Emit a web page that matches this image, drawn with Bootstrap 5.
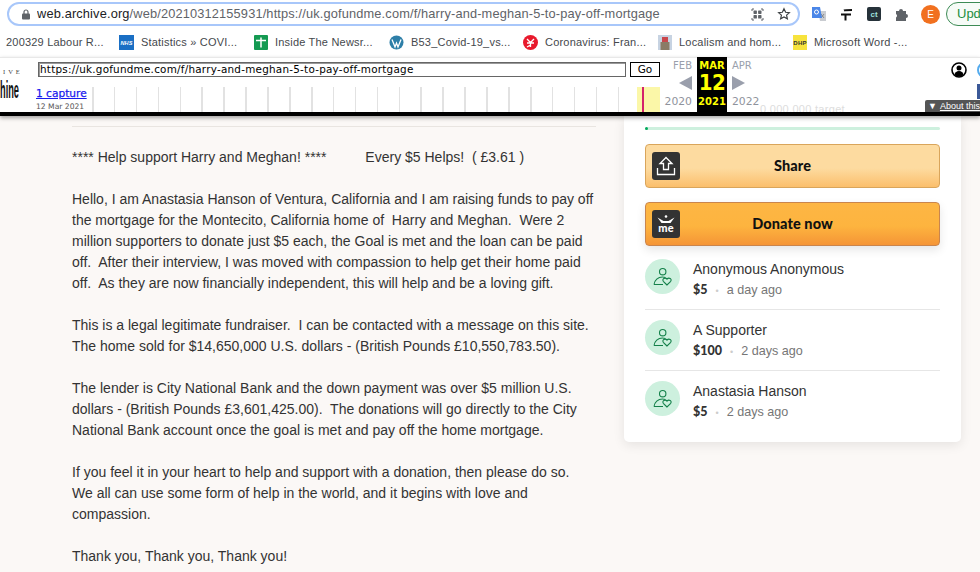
<!DOCTYPE html>
<html lang="en">
<head>
  <meta charset="UTF-8">
  <meta name="viewport" content="width=device-width, initial-scale=1.0">
  <title>Harry and Meghan fundraiser</title>
  <link href="https://cdn.jsdelivr.net/npm/bootstrap@5.3.0/dist/css/bootstrap.min.css" rel="stylesheet">
  <style>
    html, body { height: 572px; overflow: hidden; }
    body { width: 980px; background: #fbf8f6; font-family: "Liberation Sans", Arial, sans-serif; color: #333; }

    /* browser chrome */
    .top-bar { height: 30px; background: #fff; padding: 0 0 2px 7px; overflow: hidden; }
    .addr-pill { width: 793px; height: 24px; flex: none; border: 2px solid #a8c7fa; border-radius: 12px; padding: 0 7px 0 12px; font-size: 12.8px; color: #5f6368; letter-spacing: .15px; }
    .addr-pill b { font-weight: 400; color: #202124; }
    .addr-url { margin-left: 6px; flex: 1; white-space: nowrap; overflow: hidden; }
    .qr-ico { margin-right: 13px; }
    .ext-icons { padding-left: 12px; flex: none; }
    .ext-icons svg { margin-right: 14px; flex: none; }
    .avatar-e { width: 19px; height: 19px; flex: none; border-radius: 50%; background: #f1701f; color: #fff; font-size: 10px; line-height: 19px; text-align: center; margin-left: -2px; }
    .update-pill { height: 24px; width: 60px; flex: none; margin-left: 6px; border: 1px solid #3d8b55; border-radius: 12px; color: #1e8e3e; font-size: 13px; line-height: 22px; padding-left: 10px; white-space: nowrap; background: #f6fbf7; }
    .bookmarks { height: 27px; background: #fff; font-size: 11px; color: #45484c; padding: 0 0 3px 6px; white-space: nowrap; letter-spacing: .2px; }
    .bm-item { gap: 7px; }
    .bm-item svg { flex: none; }
    .bm-1 { width: 113px; }
    .bm-2, .bm-3, .bm-5, .bm-6 { width: 135px; }
    .bm-4 { width: 134px; }

    /* wayback toolbar */
    .wb-bar { height: 59px; background: #fff; border-bottom: 4px solid #000; box-shadow: inset 0 1px 0 #e8e8e8, 0 2px 4px rgba(0,0,0,.35); position: relative; z-index: 2; overflow: hidden; }
    .wb-logo { width: 36px; flex: none; color: #111; overflow: hidden; }
    .wb-ive { font-family: "Liberation Serif", serif; font-size: 6.5px; letter-spacing: 3px; padding: 11px 0 0 3px; line-height: 8px; color: #444; }
    .wb-hine { font-family: "Liberation Sans", sans-serif; font-size: 24px; font-weight: 700; line-height: 20px; transform: scaleX(.385); transform-origin: 0 0; margin-top: 4px; }
    .wb-mid { width: 624px; flex: none; }
    .wb-url { width: 588px; height: 15px; margin: 5px 4px 0 2px; border: 1px solid #666; box-shadow: inset 1px 1px 0 #999; font-family: "DejaVu Sans", sans-serif; font-size: 10.4px; line-height: 13px; padding-left: 1px; color: #000; letter-spacing: .24px; white-space: nowrap; }
    .wb-go { width: 30px; height: 15px; margin-top: 5px; border: 1px solid #000; font-family: "DejaVu Sans", sans-serif; font-size: 10.5px; line-height: 13px; text-align: center; color: #000; }
    .wb-caps { width: 56px; flex: none; }
    .wb-caps a { display: block; font-family: "DejaVu Sans", sans-serif; font-size: 10.6px; line-height: 12px; color: #1a1aee; margin-top: 10px; white-space: nowrap; -webkit-text-stroke: .25px #1a1aee; }
    .wb-caps div { font-family: "DejaVu Sans", sans-serif; font-size: 7.6px; line-height: 10px; color: #555; margin-top: 3px; white-space: nowrap; }
    .wb-line { flex: 1; height: 25px; margin-top: 10px; background: repeating-linear-gradient(90deg, #e2e2e2 0 1.5px, transparent 1.5px 21.9px); position: relative; }
    .wb-mark { position: absolute; left: 545px; top: 0; width: 23px; height: 25px; background: #fbf7a8; }
    .wb-mark i { position: absolute; left: 5px; top: 0; width: 2px; height: 25px; background: #d4236b; }
    .wb-cal { margin-left: 2px; flex: none; font-family: "DejaVu Sans", sans-serif; color: #9a9fac; position: relative; z-index: 1; }
    .cal-side { width: 32px; font-size: 10px; }
    .cal-left { text-align: right; padding-right: 2px; }
    .cal-right { padding-left: 2px; }
    .cal-mid { width: 30px; background: #000; color: #ff0; margin: 0 3px; font-weight: 700; text-align: center; }
    .cal-mid .cal-mon { font-size: 10px; line-height: 11px; padding-top: 3px; }
    .cal-mid .cal-day { font-family: "DejaVu Sans Condensed", "DejaVu Sans", sans-serif; font-size: 22px; line-height: 24px; letter-spacing: -.5px; }
    .cal-mid .cal-yr { font-size: 10px; line-height: 14px; }
    .cal-top { line-height: 11px; padding-top: 3px; }
    .cal-arrow { height: 24px; }
    .cal-bot { line-height: 14px; font-size: 10.8px; color: #8f939c; }
    .wb-ghost { position: absolute; left: 760px; top: 44px; font-size: 11px; color: #ddd; letter-spacing: .3px; }
    .wb-about { position: absolute; right: 0; bottom: 0; width: 55px; height: 12px; background: #555; color: #fff; font-size: 9px; line-height: 12px; padding-left: 3px; white-space: nowrap; border-radius: 2px 0 0 0; }
    .wb-about u { margin-left: 3px; }
    .wb-user { position: absolute; left: 951px; top: 5px; }
    .wb-fb { position: absolute; left: 977px; top: 27px; width: 3px; height: 15px; background: #3b5998; }
    .wb-tw { position: absolute; left: 977px; top: 5px; width: 16px; height: 16px; border: 2px solid #55acee; border-radius: 50%; }

    /* page */
    .story-col { width: 624px; padding: 10px 28px 0 72px; flex: none; }
    .story-rule { border-top: 1px solid #e9e5e1; height: 21px; }
    .story-col p { font-size: 14px; line-height: 21px; margin: 0 0 21px; color: #333; white-space: nowrap; }
    .side-card { width: 337px; height: 326px; background: #fff; border-radius: 0 0 5px 5px; box-shadow: 0 3px 12px rgba(0,0,0,.09); padding: 11px 21px 0; }
    .prog-track { height: 3px; background: #cdf0de; border-radius: 2px; }
    .prog-fill { width: 3px; height: 3px; background: #02a95c; border-radius: 2px; }
    .act-btn { height: 44px; width: 100%; margin-top: 14px; border-radius: 4px; font-family: Lato, sans-serif; font-weight: 900; font-size: 14.5px; color: #111; position: relative; letter-spacing: .1px; padding: 0; }
    .btn-share { background: linear-gradient(#fddba0 0%, #fddba0 55%, #fbbf6c 100%); border: 1px solid #d9a55b; }
    .btn-donate { background: linear-gradient(#fdb644 0%, #fdb43f 55%, #f59536 100%); border: 1px solid #c9854d; box-shadow: 0 4px 10px rgba(0,0,0,.1); }
    .act-ico { position: absolute; left: 6px; top: 7px; width: 28px; height: 28px; border-radius: 3px; background: #333; }
    .donor-list { margin-top: 3px; }
    .donor-row { height: 61px; padding-top: 10px; gap: 13px; border-bottom: 1px solid #e6e6e6; }
    .donor-row:last-child { border-bottom: 0; }
    .donor-ico { width: 35px; height: 35px; background: #cdf0de; border-radius: 50%; flex: none; }
    .donor-name { font-size: 14px; line-height: 18px; color: #333; margin-top: 1px; }
    .donor-meta { font-size: 12.6px; line-height: 18px; margin-top: 3px; color: #767676; }
    .donor-meta b { font-family: Lato, sans-serif; font-weight: 900; color: #333; font-size: 12.5px; }
    .donor-meta i { font-style: normal; color: #ccc; margin: 0 8px; font-size: 9px; }
  </style>
</head>
<body>

  <!-- Browser toolbar -->
  <div class="top-bar d-flex align-items-center">
    <div class="addr-pill d-flex align-items-center">
      <svg width="10" height="11" viewBox="0 0 10 11"><rect x="1" y="4.5" width="8" height="6" rx="1" fill="#5f6368"/><path d="M3 5V3a2 2 0 0 1 4 0v2" fill="none" stroke="#5f6368" stroke-width="1.2"/></svg>
      <span class="addr-url"><b>web.archive.org</b>/web/20210312155931/https://uk.gofundme.com/f/harry-and-meghan-5-to-pay-off-mortgage</span>
      <svg class="qr-ico" width="13" height="13" viewBox="0 0 13 13"><path d="M1 3V1h2M10 1h2v2M12 10v2h-2M3 12H1v-2" fill="none" stroke="#5f6368"/><rect x="2.5" y="2.5" width="3.4" height="3.4" rx=".6" fill="#5f6368"/><rect x="7.1" y="2.5" width="3.4" height="3.4" rx=".6" fill="#5f6368"/><rect x="2.5" y="7.1" width="3.4" height="3.4" rx=".6" fill="#5f6368"/><rect x="7.1" y="7.1" width="3.4" height="3.4" rx=".6" fill="#5f6368"/></svg>
      <svg width="14" height="14" viewBox="0 0 24 24"><path d="M12 3l2.800 6 6.400.7-4.800 4.300 1.400 6.300L12 17l-5.800 3.300 1.400-6.300L2.800 9.700 9.200 9z" fill="none" stroke="#3c4043" stroke-width="2"/></svg>
    </div>
    <div class="ext-icons d-flex align-items-center">
      <svg width="14" height="14" viewBox="0 0 14 14"><path d="M6 4h8v10H8z" fill="#c9ccd1"/><path d="M9 7l3 4M12 7l-3 4" stroke="#777" stroke-width=".8"/><path d="M0 0h8l2 11H0z" fill="#4a86e8"/><circle cx="4.500" cy="5" r="2" fill="none" stroke="#fff"/></svg>
      <svg width="13" height="13" viewBox="0 0 13 13"><path d="M4 2.500c1-.5 6-.5 8-.5M1 6.500h10M5.500 6.500v6" fill="none" stroke="#111" stroke-width="2"/></svg>
      <svg width="14" height="14" viewBox="0 0 14 14"><rect width="14" height="14" rx="2" fill="#26323a"/><text x="7" y="10" font-size="8" font-family="Liberation Sans" font-weight="700" text-anchor="middle" fill="#9fe0dc">ct</text></svg>
      <svg width="14" height="14" viewBox="0 0 14 14"><path d="M1 4h3a2 2 0 0 1 4 0h3v3a2 2 0 0 1 0 4v3H1v-3.500a2 2 0 0 0 0-3.500z" fill="#5f6368"/></svg>
      <div class="avatar-e">E</div>
      <div class="update-pill">Upd</div>
    </div>
  </div>

  <!-- Bookmarks -->
  <div class="bookmarks d-flex align-items-center">
    <div class="bm-item bm-1 d-flex align-items-center">200329 Labour R...</div>
    <div class="bm-item bm-2 d-flex align-items-center">
      <svg width="15" height="15" viewBox="0 0 15 15"><rect width="15" height="15" fill="#1a6fc4"/><text x="7.500" y="10" font-size="5.500" font-weight="700" font-style="italic" font-family="Liberation Sans" text-anchor="middle" fill="#fff">NHS</text></svg>Statistics » COVI...</div>
    <div class="bm-item bm-3 d-flex align-items-center">
      <svg width="14" height="15" viewBox="0 0 14 15"><rect width="14" height="15" rx="1" fill="#149a52"/><path d="M2 5.500h10M7 2.500v10" stroke="#fff" stroke-width="1.500"/></svg>Inside The Newsr...</div>
    <div class="bm-item bm-4 d-flex align-items-center">
      <svg width="15" height="15" viewBox="0 0 15 15"><circle cx="7.500" cy="7.500" r="7" fill="#2e7fa8"/><path d="M3 4.500l3 7.500 1.500-4 1.500 4 3-7.500" fill="none" stroke="#fff" stroke-width="1.300"/></svg>B53_Covid-19_vs...</div>
    <div class="bm-item bm-5 d-flex align-items-center">
      <svg width="15" height="15" viewBox="0 0 15 15"><circle cx="7.500" cy="7.500" r="7.500" fill="#e8192c"/><path d="M4 4l3.500 3.500L11 4M4 8h7M7.500 7.500V12M4 12l3.500-2" fill="none" stroke="#fff" stroke-width="1.300"/></svg>Coronavirus: Fran...</div>
    <div class="bm-item bm-6 d-flex align-items-center">
      <svg width="14" height="15" viewBox="0 0 14 15"><rect width="14" height="15" fill="#c7d3e2"/><rect x="4" y="2" width="6" height="5" fill="#c9474c"/><rect x="2.500" y="7" width="9" height="8" fill="#8a7b66"/></svg>Localism and hom...</div>
    <div class="bm-item d-flex align-items-center">
      <svg width="14" height="15" viewBox="0 0 14 15"><rect width="14" height="15" fill="#f7e33d"/><text x="7" y="10" font-size="6" font-weight="700" font-family="Liberation Sans" text-anchor="middle" fill="#333">DHP</text></svg>Microsoft Word -...</div>
  </div>

  <!-- Wayback toolbar -->
  <div class="wb-bar d-flex">
    <div class="wb-logo">
      <div class="wb-ive">IVE</div>
      <div class="wb-hine">hine</div>
    </div>
    <div class="wb-mid">
      <div class="d-flex">
        <div class="wb-url">https://uk.gofundme.com/f/harry-and-meghan-5-to-pay-off-mortgage</div>
        <div class="wb-go">Go</div>
      </div>
      <div class="d-flex">
        <div class="wb-caps">
          <a href="#">1 capture</a>
          <div>12 Mar 2021</div>
        </div>
        <div class="wb-line"><div class="wb-mark"><i></i></div></div>
      </div>
    </div>
    <div class="wb-ghost">0,000,000 target</div>
    <div class="wb-cal d-flex">
      <div class="cal-side cal-left">
        <div class="cal-top">FEB</div>
        <div class="cal-arrow d-flex align-items-center justify-content-end"><svg width="13" height="14" viewBox="0 0 13 14"><path d="M13 0v14L0 7z" fill="#9a9fac"/></svg></div>
        <div class="cal-bot">2020</div>
      </div>
      <div class="cal-mid">
        <div class="cal-mon">MAR</div>
        <div class="cal-day">12</div>
        <div class="cal-yr">2021</div>
      </div>
      <div class="cal-side cal-right">
        <div class="cal-top">APR</div>
        <div class="cal-arrow d-flex align-items-center"><svg width="13" height="14" viewBox="0 0 13 14"><path d="M0 0v14l13-7z" fill="#9a9fac"/></svg></div>
        <div class="cal-bot">2022</div>
      </div>
    </div>
    <svg class="wb-user" width="16" height="16" viewBox="0 0 16 16"><circle cx="8" cy="8" r="7" fill="#fff" stroke="#000" stroke-width="1.600"/><circle cx="8" cy="6" r="2.500"/><path d="M3.500 13a4.500 4 0 0 1 9 0 7 7 0 0 1-9 0z"/></svg>
    <div class="wb-tw"></div>
    <div class="wb-fb"></div>
    <div class="wb-about">▼<u>About this</u></div>
  </div>

  <!-- Page -->
  <div class="d-flex">
    <div class="story-col">
      <div class="story-rule"></div>
      <p>**** Help support Harry and Meghan! ****&nbsp;&nbsp;&nbsp;&nbsp;&nbsp;&nbsp;&nbsp;&nbsp;&nbsp; Every $5 Helps!&nbsp; ( £3.61 )</p>
      <p>Hello, I am Anastasia Hanson of Ventura, California and I am raising funds to pay off<br>
        the mortgage for the Montecito, California home of&nbsp; Harry and Meghan.&nbsp; Were 2<br>
        million supporters to donate just $5 each, the Goal is met and the loan can be paid<br>
        off.&nbsp; After their interview, I was moved with compassion to help get their home paid<br>
        off.&nbsp; As they are now financially independent, this will help and be a loving gift.</p>
      <p>This is a legal legitimate fundraiser.&nbsp; I can be contacted with a message on this site.<br>
        The home sold for $14,650,000 U.S. dollars - (British Pounds £10,550,783.50).</p>
      <p>The lender is City National Bank and the down payment was over $5 million U.S.<br>
        dollars - (British Pounds £3,601,425.00).&nbsp; The donations will go directly to the City<br>
        National Bank account once the goal is met and pay off the home mortgage.</p>
      <p>If you feel it in your heart to help and support with a donation, then please do so.<br>
        We all can use some form of help in the world, and it begins with love and<br>
        compassion.</p>
      <p>Thank you, Thank you, Thank you!</p>
    </div>

    <div class="side-card">
      <div class="prog-track"><div class="prog-fill"></div></div>
      <button type="button" class="btn act-btn btn-share">
        <span class="act-ico d-flex align-items-center justify-content-center">
          <svg width="28" height="28" viewBox="0 0 28 28"><path d="M11.500 17.500V11.500H8L14 5.500l6 6h-3.500v6z" fill="none" stroke="#fff" stroke-width="1.300"/><path d="M5.500 16v6.500h17V16" fill="none" stroke="#fff" stroke-width="1.300"/></svg>
        </span>Share</button>
      <button type="button" class="btn act-btn btn-donate">
        <span class="act-ico d-flex align-items-center justify-content-center">
          <svg width="28" height="28" viewBox="0 0 28 28"><path d="M5.500 7.500l6 3.500h5l6-3.500-4 5.500H9.500z" fill="#fff"/><circle cx="14" cy="6.500" r="1.300" fill="#fff"/><text x="14" y="22" font-size="11" font-weight="900" font-family="Lato" text-anchor="middle" fill="#fff">me</text></svg>
        </span>Donate now</button>
      <div class="donor-list">
        <div class="donor-row d-flex">
          <div class="donor-ico"><svg width="35" height="35" viewBox="0 0 35 35"><circle cx="17.700" cy="12.700" r="3.200" fill="none" stroke="#14804a" stroke-width="1.100"/><path d="M9 25.500c.5-4.500 4-7.500 8.500-7.500 1 0 2 .2 3 .5M9 25.500h9" fill="none" stroke="#14804a" stroke-width="1.100"/><path d="M22 26l-3.700-3.700c-1.600-2.200 1.700-4.300 3.700-2.200 2-2.100 5.300 0 3.700 2.200z" fill="none" stroke="#14804a" stroke-width="1.100"/></svg></div>
          <div><div class="donor-name">Anonymous Anonymous</div><div class="donor-meta"><b>$5</b><i>•</i>a day ago</div></div>
        </div>
        <div class="donor-row d-flex">
          <div class="donor-ico"><svg width="35" height="35" viewBox="0 0 35 35"><circle cx="17.700" cy="12.700" r="3.200" fill="none" stroke="#14804a" stroke-width="1.100"/><path d="M9 25.500c.5-4.500 4-7.500 8.500-7.500 1 0 2 .2 3 .5M9 25.500h9" fill="none" stroke="#14804a" stroke-width="1.100"/><path d="M22 26l-3.700-3.700c-1.600-2.200 1.700-4.300 3.700-2.200 2-2.100 5.300 0 3.700 2.200z" fill="none" stroke="#14804a" stroke-width="1.100"/></svg></div>
          <div><div class="donor-name">A Supporter</div><div class="donor-meta"><b>$100</b><i>•</i>2 days ago</div></div>
        </div>
        <div class="donor-row d-flex">
          <div class="donor-ico"><svg width="35" height="35" viewBox="0 0 35 35"><circle cx="17.700" cy="12.700" r="3.200" fill="none" stroke="#14804a" stroke-width="1.100"/><path d="M9 25.500c.5-4.500 4-7.500 8.500-7.500 1 0 2 .2 3 .5M9 25.500h9" fill="none" stroke="#14804a" stroke-width="1.100"/><path d="M22 26l-3.700-3.700c-1.600-2.200 1.700-4.300 3.700-2.200 2-2.100 5.300 0 3.700 2.200z" fill="none" stroke="#14804a" stroke-width="1.100"/></svg></div>
          <div><div class="donor-name">Anastasia Hanson</div><div class="donor-meta"><b>$5</b><i>•</i>2 days ago</div></div>
        </div>
      </div>
    </div>
  </div>

  <script src="https://cdn.jsdelivr.net/npm/bootstrap@5.3.0/dist/js/bootstrap.bundle.min.js"></script>
</body>
</html>
